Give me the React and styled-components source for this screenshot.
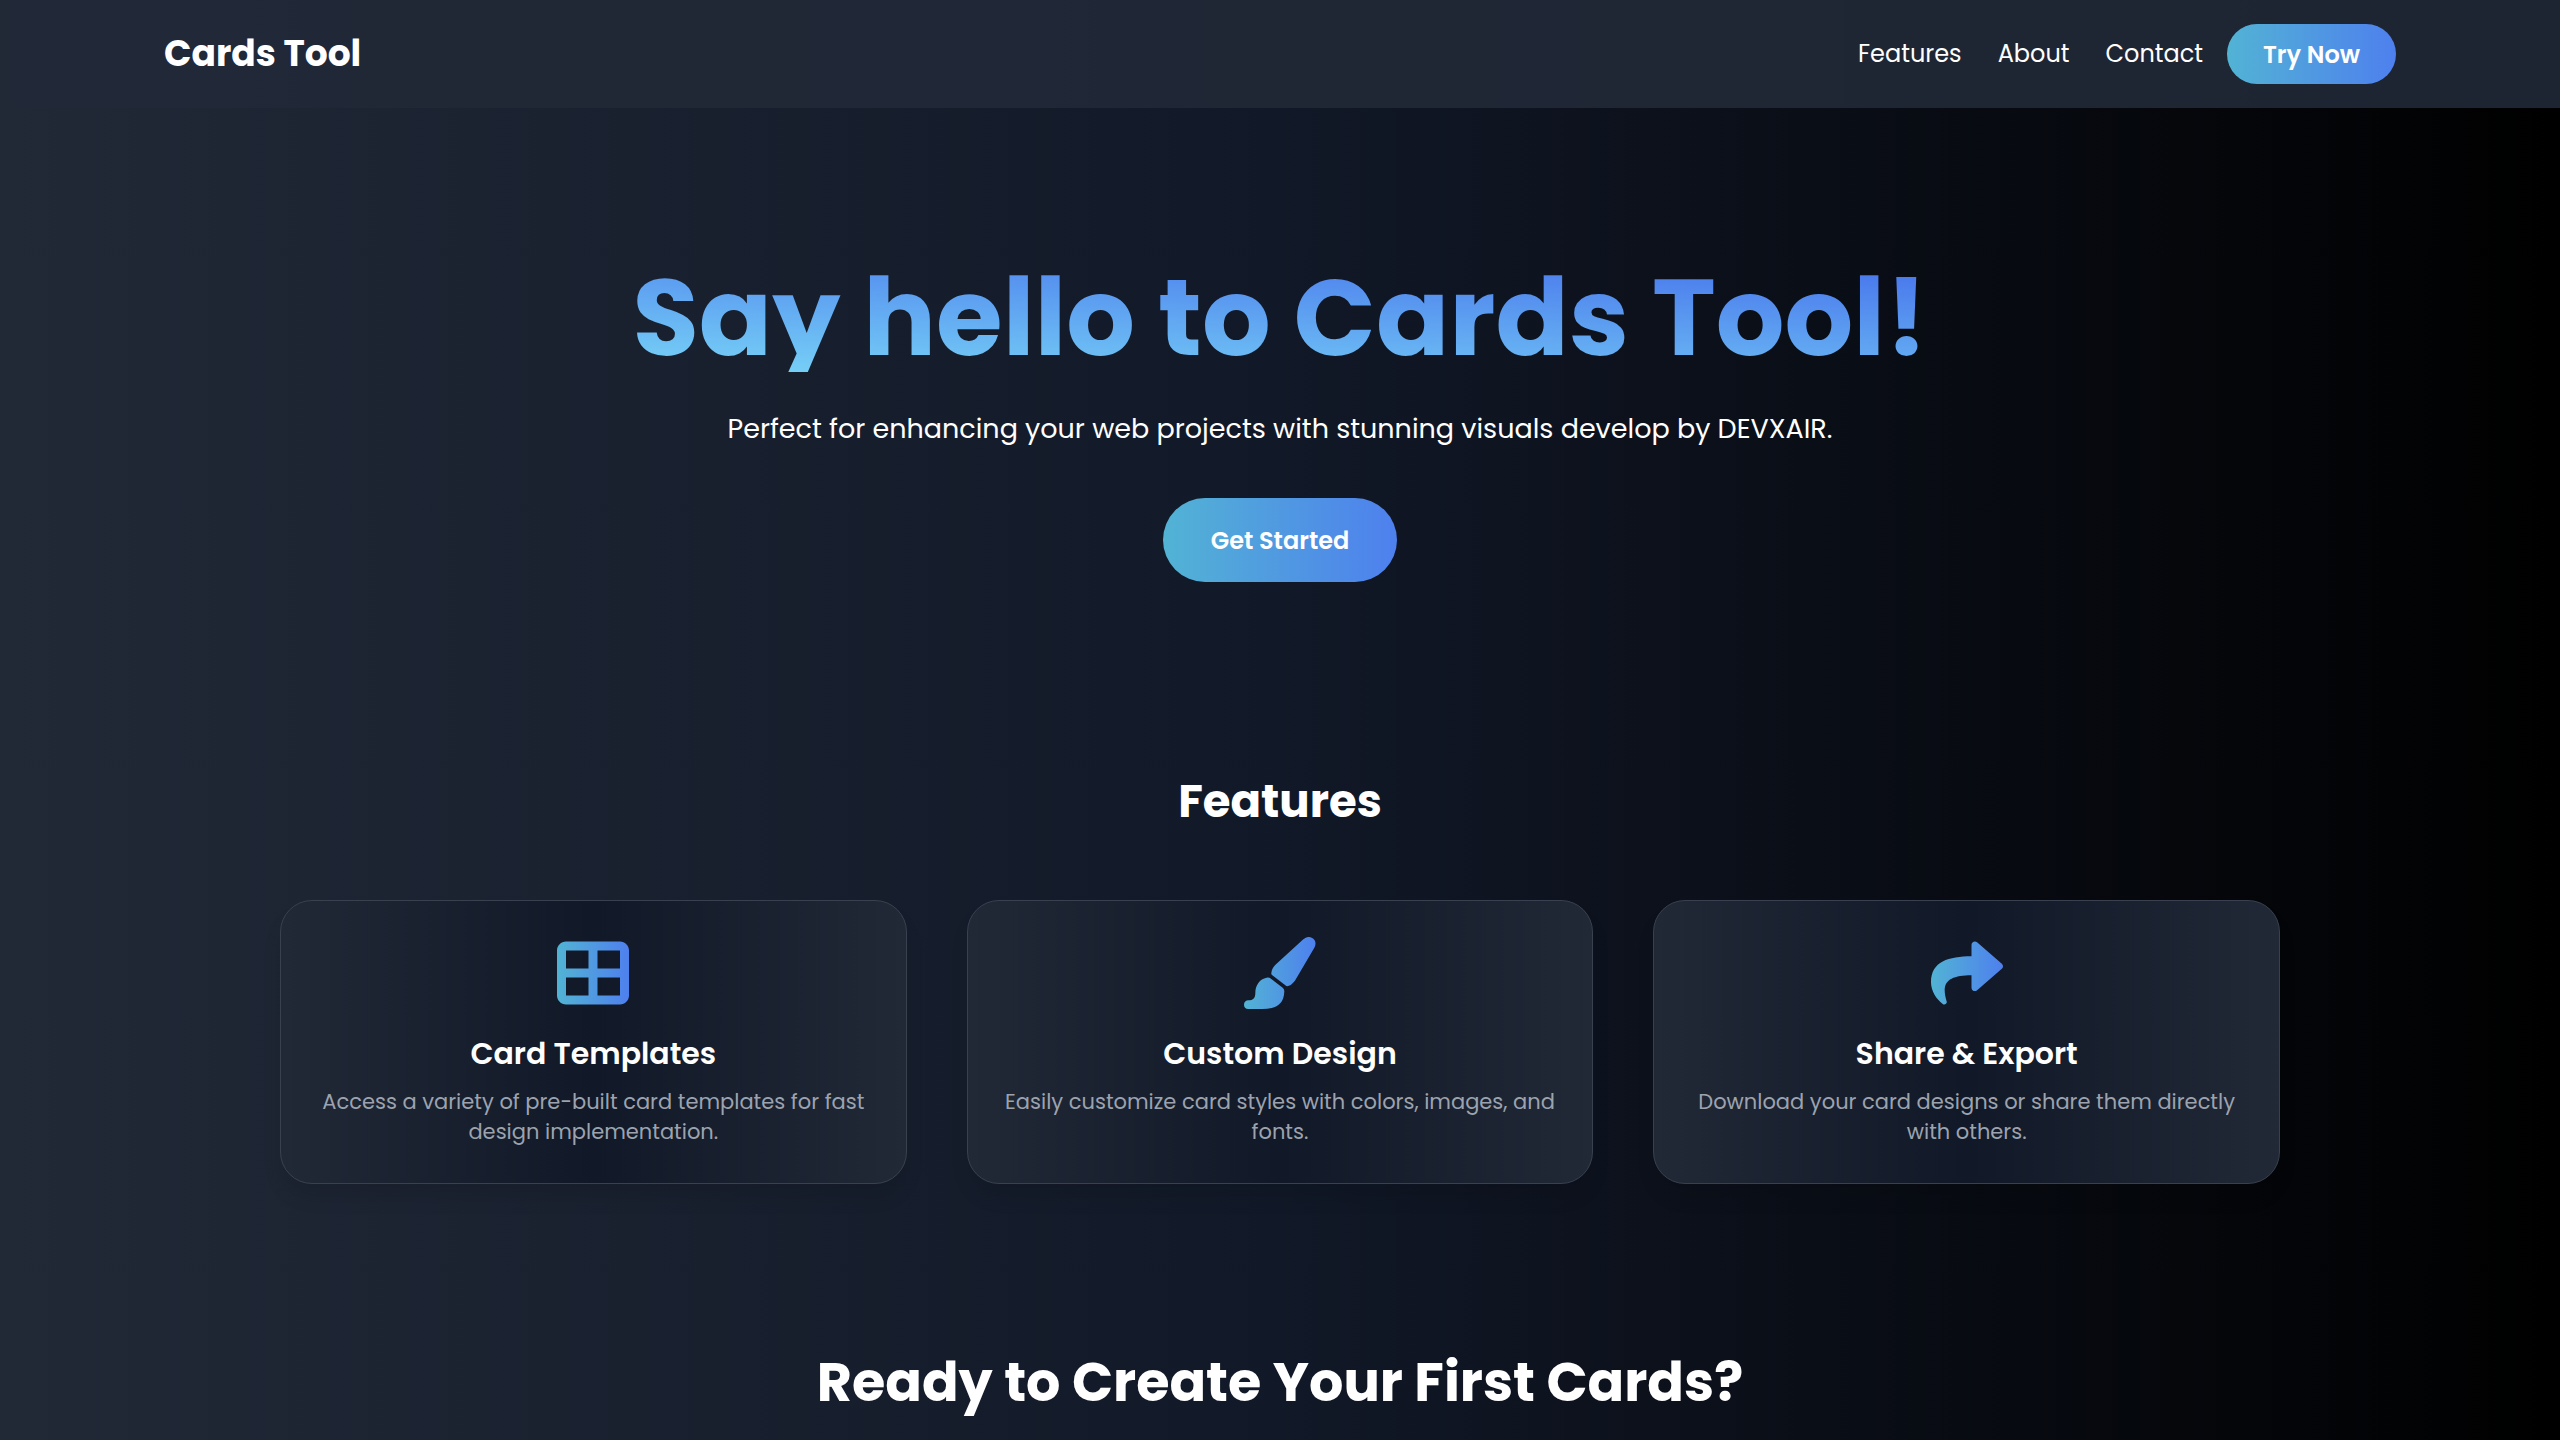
import React from "react";
import styled, { createGlobalStyle } from "styled-components";
import { FaTableCellsLarge } from "react-icons/fa6";
import { FaShare } from "react-icons/fa";

const GlobalStyle = createGlobalStyle`
  *, *::before, *::after { box-sizing: border-box; }
  body {
    margin: 0;
    color: #fff;
    background: #000;
    font-family: Poppins, Inter, "Liberation Sans", sans-serif;
  }
  h1, h2, h3, p, ul { margin: 0; padding: 0; }
`;

const Page = styled.div`
  display: flex;
  flex-direction: column;
  min-height: 100vh;
  background: linear-gradient(to right, #212836, #111827, #000);
`;

const Header = styled.header`
  display: flex;
  align-items: center;
  justify-content: space-between;
  min-height: 108px;
  padding: 24px 164px;
  background: rgba(33, 41, 55, 0.9);
`;

const Brand = styled.a`
  color: #fff;
  font-size: 36px;
  font-weight: 700;
  line-height: 48px;
  text-decoration: none;
`;

const Nav = styled.nav`
  display: flex;
  align-items: center;
  gap: 24px;
`;

const NavList = styled.ul`
  display: flex;
  gap: 36px;
  list-style: none;
`;

const NavLink = styled.a`
  color: #fff;
  font-size: 24px;
  line-height: 36px;
  text-decoration: none;
`;

const Button = styled.button`
  height: ${(p) => (p.$large ? 84 : 60)}px;
  padding: 0 ${(p) => (p.$large ? 48 : 36)}px;
  border: 0;
  border-radius: 999px;
  color: #fff;
  background: linear-gradient(to right, #52b3d4, #4e80ee);
  font-family: inherit;
  font-size: 24px;
  font-weight: 600;
  cursor: pointer;
`;

const Hero = styled.section`
  display: flex;
  flex-direction: column;
  align-items: center;
  padding: 156px 164px 144px;
  text-align: center;
`;

const HeroTitle = styled.h1`
  align-self: stretch;
  font-size: 108px;
  font-weight: 700;
  line-height: 108px;
  color: transparent;
  background: linear-gradient(to top right, #7ee0f8, #4066ea);
  background-clip: text;
  -webkit-background-clip: text;
`;

const HeroText = styled.p`
  margin: 36px 0 48px;
  font-size: 27px;
  line-height: 42px;
`;

const Features = styled.section`
  padding: 40px 280px 0;
`;

const SectionTitle = styled.h2`
  margin-bottom: 62px;
  font-size: 45px;
  font-weight: 700;
  line-height: 72px;
  text-align: center;
`;

const CardGrid = styled.div`
  display: grid;
  grid-template-columns: repeat(3, 1fr);
  gap: 60px;
`;

const Card = styled.article`
  display: flex;
  flex-direction: column;
  align-items: center;
  padding: 36px;
  border: 1px solid #394150;
  border-radius: 32px;
  background: linear-gradient(to right, #212836, #111827, #212836);
  box-shadow: 0 15px 22px -4px rgba(0, 0, 0, 0.1);
  text-align: center;

  svg {
    width: 72px;
    height: 72px;
    fill: url(#icon-gradient);
  }
`;

const CardTitle = styled.h3`
  margin: 22px 0 10px;
  font-size: 30px;
  font-weight: 600;
  line-height: 46px;
`;

const CardText = styled.p`
  color: #9ca3af;
  font-size: 21px;
  line-height: 30px;
`;

const CallToAction = styled.section`
  padding: 168px 48px 24px;
  text-align: center;
`;

const CallTitle = styled.h2`
  font-size: 54px;
  font-weight: 700;
  line-height: 60px;
`;

const GradientDefs = styled.svg`
  display: block;
  width: 0;
  height: 0;
`;

function BrushIcon() {
  return (
    <svg viewBox="44 36 216 216" aria-hidden="true">
      <path d="M222 43C230 36 238 34 247 38C260 44 261 57 255 68L203 157C196 170 187 182 174 184Q171 184 168 181L129 151Q125 148 126 144C127 133 133 125 140 118ZM112 158Q120 157 126 162L160 188Q165 192 165 199C164 232 148 244 127 249Q115 252 98 252H57C48 252 44 246 44 239C44 231 50 226 57 226C72 226 78 219 78 204C78 181 91 161 112 158Z" />
    </svg>
  );
}

const features = [
  {
    icon: <FaTableCellsLarge aria-hidden="true" />,
    title: "Card Templates",
    text: "Access a variety of pre-built card templates for fast design implementation.",
  },
  {
    icon: <BrushIcon />,
    title: "Custom Design",
    text: "Easily customize card styles with colors, images, and fonts.",
  },
  {
    icon: <FaShare aria-hidden="true" />,
    title: "Share & Export",
    text: "Download your card designs or share them directly with others.",
  },
];

export default function App() {
  return (
    <Page>
      <GlobalStyle />
      <Header>
        <Brand href="#home">Cards Tool</Brand>
        <Nav>
          <NavList>
            <li><NavLink href="#features">Features</NavLink></li>
            <li><NavLink href="#about">About</NavLink></li>
            <li><NavLink href="#contact">Contact</NavLink></li>
          </NavList>
          <Button type="button">Try Now</Button>
        </Nav>
      </Header>
      <main>
        <Hero id="home">
          <HeroTitle>Say hello to Cards Tool!</HeroTitle>
          <HeroText>
            Perfect for enhancing your web projects with stunning visuals develop by DEVXAIR.
          </HeroText>
          <Button type="button" $large>Get Started</Button>
        </Hero>
        <Features id="features">
          <SectionTitle>Features</SectionTitle>
          <CardGrid>
            {features.map((f) => (
              <Card key={f.title}>
                {f.icon}
                <CardTitle>{f.title}</CardTitle>
                <CardText>{f.text}</CardText>
              </Card>
            ))}
          </CardGrid>
        </Features>
        <CallToAction>
          <CallTitle>Ready to Create Your First Cards?</CallTitle>
        </CallToAction>
      </main>
      <GradientDefs aria-hidden="true">
        <defs>
          <linearGradient id="icon-gradient">
            <stop offset="0" stopColor="#52b3d4" />
            <stop offset="1" stopColor="#4e80ee" />
          </linearGradient>
        </defs>
      </GradientDefs>
    </Page>
  );
}
